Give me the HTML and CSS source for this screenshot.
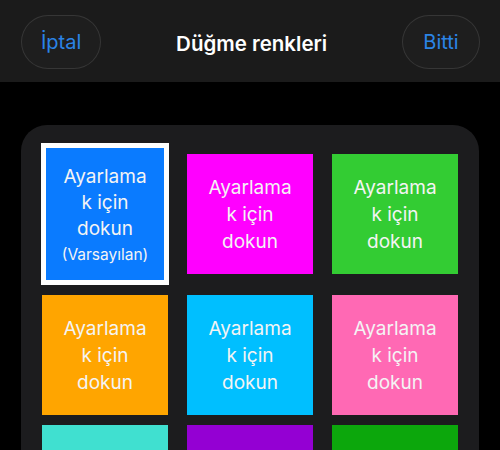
FILE: index.html
```html
<!DOCTYPE html>
<html lang="tr">
<head>
  <meta charset="UTF-8">
  <meta name="viewport" content="width=device-width, initial-scale=1.0">
  <title>Düğme renkleri</title>
  <link rel="stylesheet" href="styles.css">
</head>
<body>
  <header class="topbar">
    <button class="pill">İptal</button>
    <h1 class="title">Düğme renkleri</h1>
    <button class="pill">Bitti</button>
  </header>

  <main class="panel">
    <div class="grid">
      <button class="tile selected blue">Ayarlamak için dokun <span class="note">(Varsayılan)</span></button>
      <button class="tile magenta">Ayarlamak için dokun</button>
      <button class="tile green">Ayarlamak için dokun</button>

      <button class="tile orange">Ayarlamak için dokun</button>
      <button class="tile cyan">Ayarlamak için dokun</button>
      <button class="tile pink">Ayarlamak için dokun</button>

      <button class="tile teal">Ayarlamak için dokun</button>
      <button class="tile purple">Ayarlamak için dokun</button>
      <button class="tile darkgreen">Ayarlamak için dokun</button>
    </div>
  </main>
</body>
</html>
```

FILE: styles.css
```css
* {
  margin: 0;
  padding: 0;
  box-sizing: border-box;
}

body {
  font-family: 'Inter', 'Noto Sans', sans-serif;
  background-color: #000;
  height: 450px;
  overflow: hidden;
}

.topbar {
  height: 82px;
  background-color: #1b1b1b;
  display: flex;
  justify-content: space-between;
  align-items: center;
  padding: 2px 20px 0 21px;
}

.pill {
  height: 54px;
  min-width: 78px;
  padding: 0 19px;
  border-radius: 27px;
  border: 1px solid rgba(255, 255, 255, 0.11);
  background-color: #1e1e1e;
  color: #2b84e6;
  font-family: inherit;
  font-size: 20px;
}

.title {
  color: #fff;
  font-size: 20.5px;
  font-weight: 600;
  margin-top: 2px;
}

.panel {
  margin: 43px 21px 0 21px;
  background-color: #1c1c1e;
  border-radius: 26px 26px 0 0;
  padding: 18px 21px 0 21px;
  height: 325px;
}

.grid {
  display: grid;
  grid-template-columns: repeat(3, 126px);
  column-gap: 19px;
  row-gap: 10px;
  align-items: center;
}

.tile {
  height: 120px;
  border: none;
  color: #f4f4f4;
  font-family: inherit;
  font-size: 19px;
  line-height: 27px;
  padding: 0 19px;
  overflow-wrap: anywhere;
  text-align: center;
}

.tile.selected {
  width: 128px;
  height: 142px;
  margin: 0 -1px;
  border: 5px solid #fff;
  line-height: 26px;
  padding: 3px 15px 0 15px;
}

.note {
  display: block;
  font-size: 15.5px;
  margin: 0 -12px;
}

.blue { background-color: #0a7bff; }
.magenta { background-color: #ff00ff; }
.green { background-color: #33cc33; }
.orange { background-color: #ffa500; }
.cyan { background-color: #00bfff; }
.pink { background-color: #ff69b4; }
.teal { background-color: #40e0d0; }
.purple { background-color: #9400d3; }
.darkgreen { background-color: #0ca70c; }
```
